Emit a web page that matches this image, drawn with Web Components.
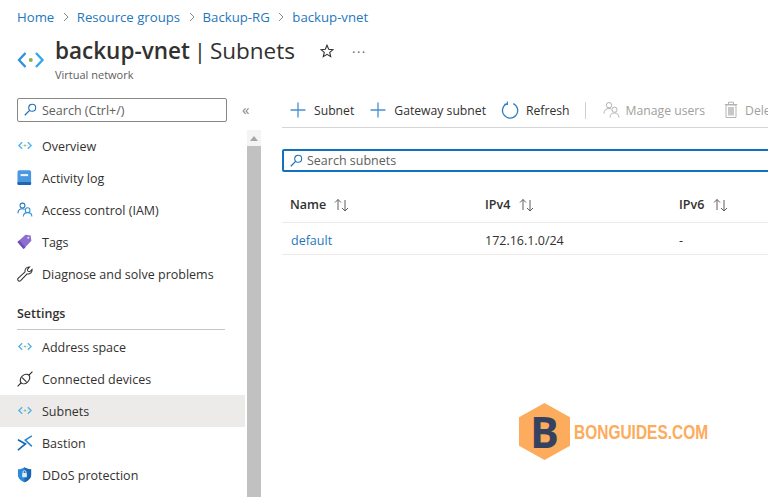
<!DOCTYPE html>
<html>
<head>
<meta charset="utf-8">
<style>
html, body { margin: 0; height: 100%; overflow: hidden; background: #fff; }
body { font: 12.5px "Open Sans", "Noto Sans", sans-serif; color: #323130; }
</style>
</head>
<body>
<az-page>
  <az-header slot="header" name="backup-vnet" section="Subnets" kind="Virtual network"></az-header>
  <az-nav slot="nav">
    <az-search-box>Search (Ctrl+/)</az-search-box>
    <az-nav-item icon="vnet">Overview</az-nav-item>
    <az-nav-item icon="log">Activity log</az-nav-item>
    <az-nav-item icon="users">Access control (IAM)</az-nav-item>
    <az-nav-item icon="tag">Tags</az-nav-item>
    <az-nav-item icon="wrench">Diagnose and solve problems</az-nav-item>
    <az-nav-head>Settings</az-nav-head>
    <az-nav-item icon="vnet">Address space</az-nav-item>
    <az-nav-item icon="plug">Connected devices</az-nav-item>
    <az-nav-item icon="vnet" selected>Subnets</az-nav-item>
    <az-nav-item icon="bastion">Bastion</az-nav-item>
    <az-nav-item icon="shield">DDoS protection</az-nav-item>
  </az-nav>
  <az-main slot="main"></az-main>
</az-page>
<az-logo></az-logo>

<script>
const ICONS = {
  plus: '<path d="M9 1.500v15M1.500 9h15" stroke="#4a8fd0" stroke-width="1.300" fill="none"/>',
  search: '<circle cx="10.500" cy="5.500" r="4" stroke="#1f6fb8" stroke-width="1.200" fill="none"/><path d="M7.600 8.400 2 14" stroke="#1f6fb8" stroke-width="1.400" fill="none"/>',
  refresh: '<path d="M6 2.600A7.600 7.600 0 1 0 12.200 2.600" stroke="#2f7fc4" stroke-width="1.300" fill="none"/><path d="M6.400 .4V3.400H3.400" stroke="#2f7fc4" stroke-width="1.100" fill="none"/>',
  usersGrey: '<g stroke="#b5b3b1" stroke-width="1" fill="none"><circle cx="6" cy="4.200" r="2.700"/><path d="M1 12.500c0-3.200 2-5 5-5 1 0 1.800.2 2.400.6"/><circle cx="11.500" cy="8.700" r="2.600"/><path d="M7 16.500c0-2.800 1.800-4.600 4.500-4.600s4.500 1.800 4.500 4.600"/></g>',
  trash: '<g stroke="#b5b3b1" stroke-width="1" fill="none"><path d="M4 4h10v12.500H4zM2.800 3.500h12.400M6.500 3V1.200h5V3"/></g><path d="M6 6h6v8.500H6z" fill="#c9c7c5"/>',
  vnet: '<g fill="none" stroke="#50b0e8" stroke-width="1.400"><path d="M5.500 4.500 2 8l3.500 3.500M11.500 4.500 15 8l-3.500 3.500"/></g><circle cx="8.500" cy="8" r="1" fill="#8cbd5a"/><circle cx="6.300" cy="8" r=".6" fill="#9ad0f0"/><circle cx="10.700" cy="8" r=".6" fill="#9ad0f0"/>',
  log: '<rect x=".5" y=".3" width="14.500" height="15.700" rx="1.800" fill="#4a98e0"/><rect x=".5" y="12.800" width="14.500" height="3.200" rx="1.200" fill="#1d66b4"/><rect x="3.800" y="4.300" width="8" height="2.200" fill="#e6f2fb"/>',
  users: '<g fill="none" stroke="#1f78c4" stroke-width="1.100"><circle cx="5.800" cy="3.800" r="2.600"/><path d="M1 12c0-3 2-4.800 4.800-4.800 1 0 1.700.2 2.300.6"/><circle cx="11.300" cy="8.700" r="2.500" stroke="#2f94d8"/><path d="M6.800 15.500c0-2.600 1.800-4.200 4.500-4.200s4.500 1.600 4.500 4.200" stroke="#2f94d8"/></g>',
  tag: '<path d="M.5 8.500 9 .8l5.500.8.8 5.500L7 16z" fill="#8d6fd1"/><path d="M.5 8.500 7 16l2-2L2.500 6.700z" fill="#6f4fb8"/><circle cx="12" cy="4" r="1.100" fill="#e4dbf6"/>',
  wrench: '<path d="M1.400 13 8.600 6.300C8 3.400 10 .6 13.400 1L11 3.500l.6 2 2 .6 2.400-2.400C16.400 7.100 13.400 9.100 10.700 8.400L3.900 15.600a1.700 1.700 0 0 1-2.500-2.600z" fill="none" stroke="#323130" stroke-width="1.100"/>',
  plug: '<g fill="none" stroke="#323130" stroke-width="1.200"><path d="M.6 16.400 4.500 12.500M12.500 4.500 16.400.6M5.500 7 10 11.500"/><ellipse cx="8.500" cy="8.500" rx="5.800" ry="4.200" transform="rotate(-45 8.500 8.500)"/></g>',
  bastion: '<g fill="none" stroke-width="1.700"><path d="M1 5l8 4.500L1 16" stroke="#1467b4"/><path d="M15.800 1 8.800 5.500 15.800 12" stroke="#2d86d0"/></g>',
  shield: '<path d="M8 .2c2.200 1.500 4.500 2.200 7 2.200v6.100c0 3.600-3.200 6.200-7 7.700C4.200 14.700 1 12.100 1 8.500V2.400C3.500 2.400 5.800 1.700 8 .2z" fill="#2e88d8"/><path d="M8 .2c2.200 1.500 4.500 2.200 7 2.200v6.100c0 3.600-3.200 6.200-7 7.700z" fill="#1b66b2"/><rect x="5.500" y="6.500" width="5" height="4.500" rx=".6" fill="#dcebf8"/><path d="M6.500 6.500V5.300a1.500 1.500 0 0 1 3 0v1.200" stroke="#dcebf8" fill="none"/>',
  sort: '<g fill="none" stroke="#605e5c" stroke-width="1"><path d="M4.500 12V1.500M1.500 4.500l3-3 3 3M11.500 2v11M8.500 10l3 3 3-3"/></g>'
};

function svg(name, w, h, vb) {
  return `<svg width="${w}" height="${h}" viewBox="${vb}" aria-hidden="true">${ICONS[name]}</svg>`;
}

class AzPage extends HTMLElement {
  constructor() {
    super();
    this.attachShadow({mode: 'open'}).innerHTML = `
<style>
:host { display: grid; grid-template-columns: 282px 1fr; grid-template-rows: 85px 1fr; height: 497px; width: 768px; overflow: hidden; }
::slotted([slot=header]) { grid-column: 1 / 3; }
</style>
<slot name="header"></slot>
<slot name="nav"></slot>
<slot name="main"></slot>`;
  }
}

class AzHeader extends HTMLElement {
  constructor() {
    super();
    const crumbs = ['Home', 'Resource groups', 'Backup-RG', 'backup-vnet'];
    this.attachShadow({mode: 'open'}).innerHTML = `
<style>
:host { display: block; padding: 8px 0 0 17px; }
.crumbs { display: flex; align-items: center; height: 17px; font-size: 13.2px; color: #1f77bd; }
.crumbs svg { margin: 0 8px 0 8.500px; }
.title { display: flex; margin-top: 11px; }
.logo { margin: 15px 10px 0 0; }
h1 { margin: 0; font-size: 22.500px; line-height: 30px; font-weight: 400; color: #323130; white-space: nowrap; word-spacing: -2px; }
b { font-weight: 600; }
.sub { font-size: 11px; line-height: 14px; color: #605e5c; margin-top: 2px; }
.acts { display: flex; align-items: center; height: 30px; margin-left: 25px; }
.dots { margin-left: 18px; font-size: 13px; letter-spacing: 1.500px; color: #605e5c; line-height: 14px; position: relative; top: -3px; }
</style>
<div class="crumbs">${crumbs.map((c, i) => (i ? '<svg width="6" height="10" viewBox="0 0 6 10"><path d="M1 1l4 4-4 4" stroke="#8a8886" fill="none"/></svg>' : '') + `<span>${c}</span>`).join('')}</div>
<div class="title">
  <svg class="logo" width="28" height="18" viewBox="0 0 28 18"><path d="M8.500 2 2 9l6.500 7" stroke="#2f8fe0" stroke-width="2.300" fill="none"/><path d="M19 2l6.500 7-6.500 7" stroke="#2fa8e8" stroke-width="2.300" fill="none"/><circle cx="13.800" cy="9" r="2" fill="#8cb04e"/></svg>
  <div>
    <div style="display:flex">
      <h1><b>${this.getAttribute('name')}</b> | ${this.getAttribute('section')}</h1>
      <div class="acts">
        <svg width="14" height="14" viewBox="0 0 14 14"><path d="M7 1.200 8.700 5.200l4.300.4-3.300 2.800 1 4.200L7 10.400 3.300 12.600l1-4.200L1 5.600l4.300-.4z" fill="none" stroke="#323130" stroke-width="1.100"/></svg>
        <span class="dots">...</span>
      </div>
    </div>
    <div class="sub">${this.getAttribute('kind')}</div>
  </div>
</div>`;
  }
}

class AzSearchBox extends HTMLElement {
  constructor() {
    super();
    this.attachShadow({mode: 'open'}).innerHTML = `
<style>
:host { display: flex; align-items: center; gap: 5px; box-sizing: border-box; width: 210px; height: 24px; margin: 13px 0 8px 17px; padding-left: 5px; border: 1px solid #8a8886; border-radius: 2px; font-size: 12.5px; color: #605e5c; }
</style>
${svg('search', 14, 14, '0 0 16 16')}<slot></slot>`;
  }
}

class AzNav extends HTMLElement {
  constructor() {
    super();
    this.attachShadow({mode: 'open'}).innerHTML = `
<style>
:host { display: flex; width: 261px; height: 412px; position: relative; }
.list { width: 245px; flex: none; }
.chev { position: absolute; left: 242px; top: 16px; font-size: 15px; line-height: 16px; color: #8a8886; }
.bar { width: 14px; margin-left: 2px; margin-top: 45px; background: #f4f4f4; display: flex; flex-direction: column; }
.arrow { height: 16px; display: flex; align-items: center; justify-content: center; }
.thumb { flex: 1; background: #c1c1c1; }
</style>
<div class="list"><slot></slot></div>
<span class="chev">«</span>
<div class="bar"><div class="arrow"><svg width="8" height="5" viewBox="0 0 8 5"><path d="M4 0l4 5H0z" fill="#a6a6a6"/></svg></div><div class="thumb"></div></div>`;
  }
}

class AzNavItem extends HTMLElement {
  constructor() {
    super();
    this.attachShadow({mode: 'open'}).innerHTML = `
<style>
:host { display: flex; align-items: center; height: 32px; padding-left: 17px; gap: 9px; color: #323130; font-size: 12.5px; white-space: nowrap; }
:host([selected]) { background: #edebe9; }
svg { flex: none; }
</style>
${svg(this.getAttribute('icon'), 16, 16, '0 0 17 17')}<slot></slot>`;
  }
}

class AzNavHead extends HTMLElement {
  constructor() {
    super();
    this.attachShadow({mode: 'open'}).innerHTML = `
<style>
:host { display: block; box-sizing: border-box; height: 33px; margin: 7px 20px 1px 17px; padding-top: 8px; border-bottom: 1px solid #c8c6c4; font-weight: 600; font-size: 12.5px; line-height: 18px; color: #323130; }
</style><slot></slot>`;
  }
}

class AzToolButton extends HTMLElement {
  constructor() {
    super();
    this.attachShadow({mode: 'open'}).innerHTML = `
<style>
:host { display: flex; align-items: center; gap: var(--gap, 7px); white-space: nowrap; flex: none; font-size: 12.200px; }
:host([disabled]) { color: #a19f9d; }
svg { flex: none; }
</style>
${svg(this.getAttribute('icon'), 18, 18, '0 0 18 18')}<slot></slot>`;
  }
}

class AzMain extends HTMLElement {
  constructor() {
    super();
    this.attachShadow({mode: 'open'}).innerHTML = `
<style>
:host { display: block; overflow: hidden; }
.tools { display: flex; align-items: center; height: 43px; border-bottom: 1px solid #d6d6d6; padding: 8px 0 0 7px; box-sizing: border-box; margin-bottom: 21px; }
.sep { width: 1px; height: 17px; background: #d0d0d0; margin: 0 17px 0 15px; flex: none; }
.find { display: flex; align-items: center; gap: 4px; box-sizing: border-box; height: 23px; width: 560px; padding-left: 5px; border: 2px solid #1170c0; border-radius: 2px; color: #605e5c; font-size: 12.5px; }
table { border-collapse: collapse; table-layout: fixed; width: 600px; margin-top: 10px; }
th, td { text-align: left; padding: 0 0 0 8px; font-size: 12.5px; box-sizing: border-box; }
th { height: 40px; font-weight: 600; border-bottom: 1px solid #edebe9; vertical-align: bottom; padding-bottom: 9px; }
th svg { margin-left: 4px; vertical-align: -3px; }
td { height: 32px; padding-top: 5px; border-bottom: 1px solid #edebe9; }
a { color: #1f77bd; text-decoration: none; padding-left: 1px; }
</style>
<div class="tools">
  <az-tool-button icon="plus" style="margin-right:15px">Subnet</az-tool-button>
  <az-tool-button icon="plus" style="margin-right:15px">Gateway subnet</az-tool-button>
  <az-tool-button icon="refresh">Refresh</az-tool-button>
  <span class="sep"></span>
  <az-tool-button icon="usersGrey" disabled style="margin-right:17px;--gap:5px">Manage users</az-tool-button>
  <az-tool-button icon="trash" disabled style="--gap:5px">Delete</az-tool-button>
</div>
<div class="find">${svg('search', 14, 14, '0 0 16 16')}Search subnets</div>
<table>
  <colgroup><col style="width:195px"><col style="width:194px"><col></colgroup>
  <tr><th>Name ${svg('sort', 17, 14, '0 0 16 14')}</th><th>IPv4 ${svg('sort', 17, 14, '0 0 16 14')}</th><th>IPv6 ${svg('sort', 17, 14, '0 0 16 14')}</th></tr>
  <tr><td><a>default</a></td><td>172.16.1.0/24</td><td>-</td></tr>
</table>`;
  }
}

class AzLogo extends HTMLElement {
  constructor() {
    super();
    this.attachShadow({mode: 'open'}).innerHTML = `
<style>
:host { position: absolute; left: 519px; top: 403px; display: flex; align-items: center; gap: 4px; }
.hex { width: 51px; height: 57px; background: #fdab5c; clip-path: polygon(50% 0, 100% 25%, 100% 75%, 50% 100%, 0 75%, 0 25%); display: flex; align-items: center; justify-content: center; font: 700 43px "Open Sans", sans-serif; color: #34425f; }
.name { font: 700 20.500px "Liberation Sans", sans-serif; color: #fdab5c; transform: scaleX(.755); transform-origin: 0 50%; white-space: nowrap; }
</style>
<div class="hex">B</div><div class="name">BONGUIDES.COM</div>`;
  }
}

customElements.define('az-page', AzPage);
customElements.define('az-header', AzHeader);
customElements.define('az-search-box', AzSearchBox);
customElements.define('az-nav', AzNav);
customElements.define('az-nav-item', AzNavItem);
customElements.define('az-nav-head', AzNavHead);
customElements.define('az-tool-button', AzToolButton);
customElements.define('az-main', AzMain);
customElements.define('az-logo', AzLogo);
</script>
</body>
</html>
